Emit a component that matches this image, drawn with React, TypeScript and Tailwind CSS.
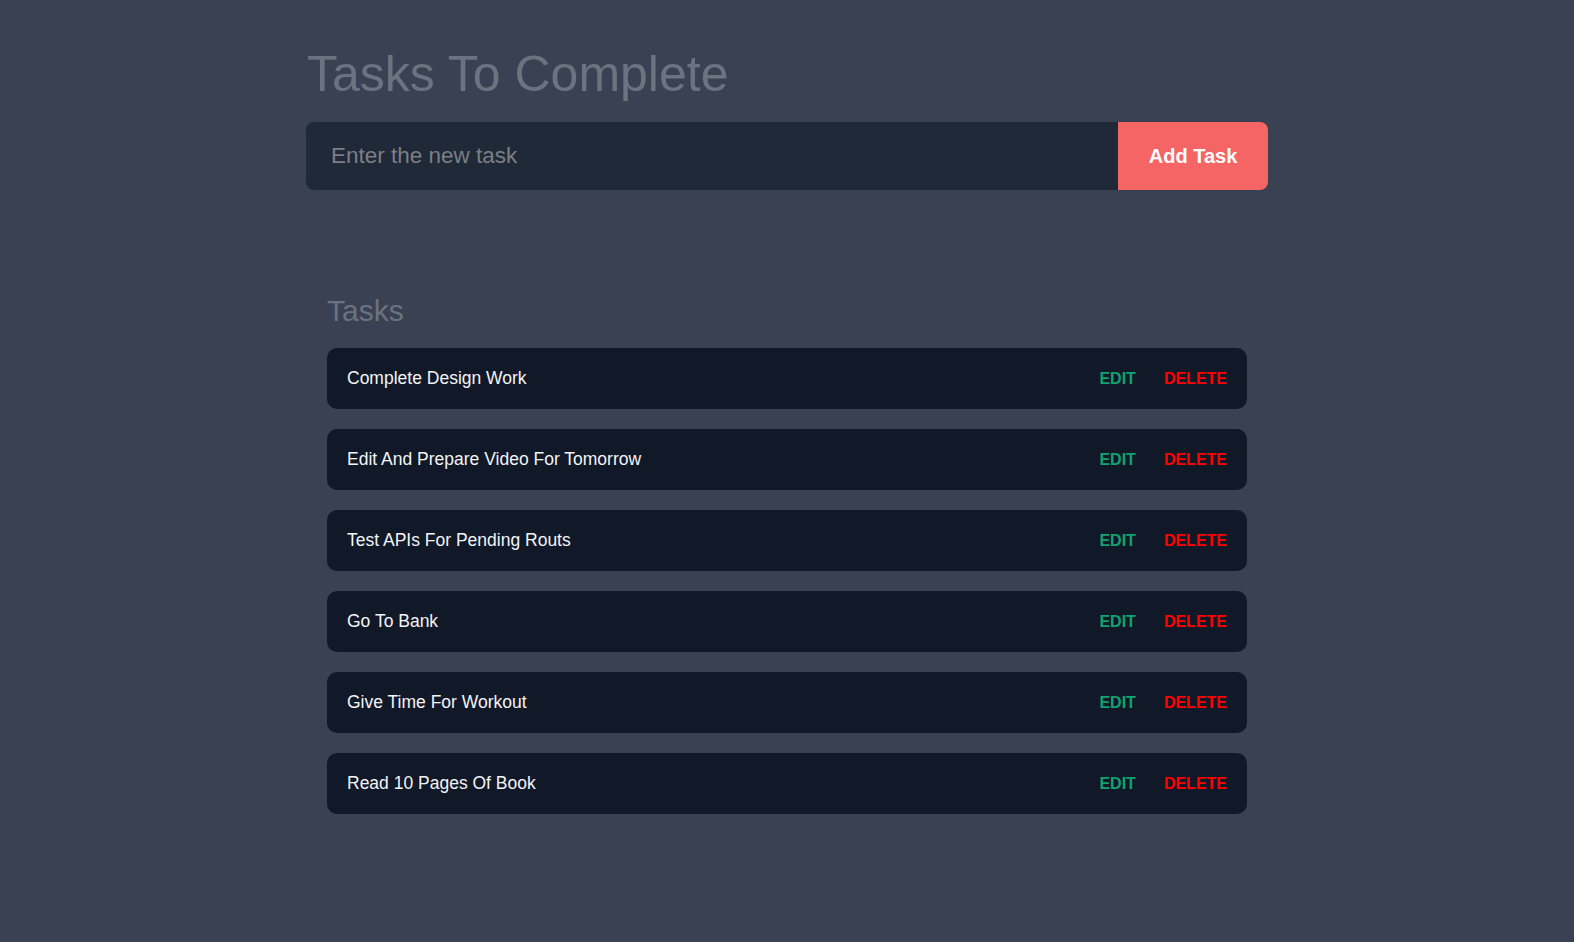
import { useState } from "react";

type Task = {
  id: number;
  title: string;
};

const initialTasks: Task[] = [
  { id: 1, title: "Complete Design Work" },
  { id: 2, title: "Edit And Prepare Video For Tomorrow" },
  { id: 3, title: "Test APIs For Pending Routs" },
  { id: 4, title: "Go To Bank" },
  { id: 5, title: "Give Time For Workout" },
  { id: 6, title: "Read 10 Pages Of Book" },
];

export default function App() {
  const [tasks, setTasks] = useState<Task[]>(initialTasks);
  const [newTask, setNewTask] = useState("");

  const addTask = () => {
    if (!newTask.trim()) return;
    setTasks([...tasks, { id: Date.now(), title: newTask.trim() }]);
    setNewTask("");
  };

  const deleteTask = (id: number) => {
    setTasks(tasks.filter((task) => task.id !== id));
  };

  return (
    <div
      className="min-h-screen w-full bg-[#394152]"
      style={{ fontFamily: '"Liberation Sans", Arial, sans-serif' }}
    >
      <div className="w-[962px] mx-auto pt-[49px] pb-16">
        <h1 className="text-[50px] leading-none text-[#6b7280] pl-px">Tasks To Complete</h1>

        <div className="flex mt-[23px] h-[68px]">
          <input
            value={newTask}
            onChange={(e) => setNewTask(e.target.value)}
            placeholder="Enter the new task"
            className="flex-1 h-full bg-[#1f2937] rounded-l-lg pl-[25px] text-[22.5px] text-gray-200 placeholder:text-[#7b7f86] outline-none"
          />
          <button
            onClick={addTask}
            className="w-[150px] h-full bg-[#f56565] rounded-r-lg text-white text-[20px] font-bold"
          >
            Add Task
          </button>
        </div>

        <div className="px-[21px] mt-[106px]">
          <h2 className="text-[30px] leading-none text-[#6b7280]">Tasks</h2>

          <div className="flex flex-col gap-5 mt-[22px]">
            {tasks.map((task) => (
              <div
                key={task.id}
                className="flex items-center justify-between h-[61px] px-5 bg-[#111827] rounded-[10px]"
              >
                <span className="text-[17.5px] text-[#f3f4f6]">{task.title}</span>
                <div className="flex items-center gap-7 text-[16px] font-bold">
                  <button className="text-[#10a36f]">EDIT</button>
                  <button onClick={() => deleteTask(task.id)} className="text-[#ff0000]">
                    DELETE
                  </button>
                </div>
              </div>
            ))}
          </div>
        </div>
      </div>
    </div>
  );
}
